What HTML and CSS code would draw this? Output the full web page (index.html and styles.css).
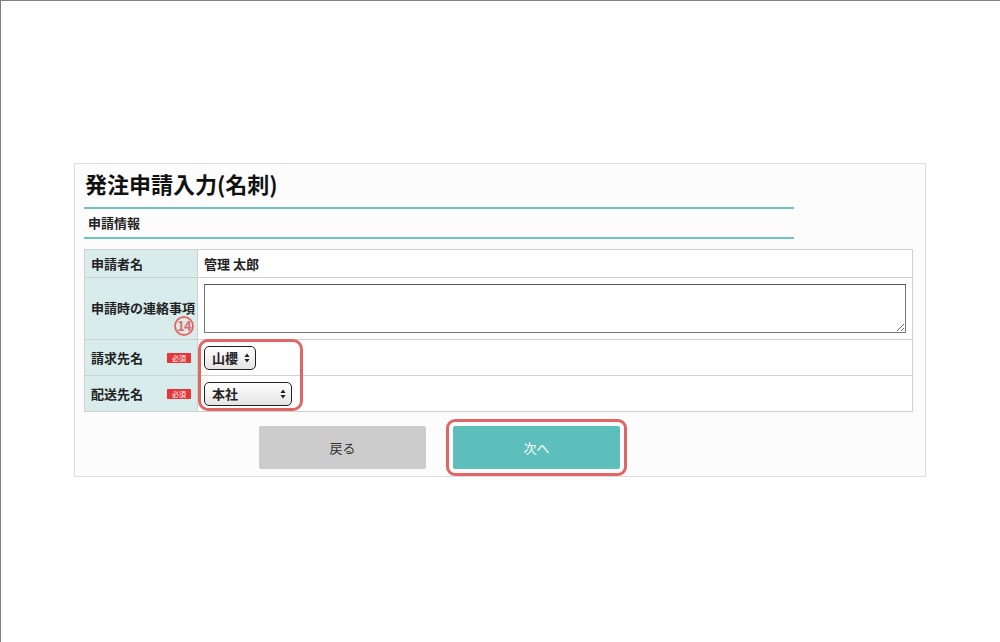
FILE: index.html
```html
<!DOCTYPE html>
<html lang="ja">
<head>
    <meta charset="UTF-8">
    <title>発注申請入力(名刺)</title>
    <link rel="stylesheet" href="styles.css">
</head>
<body>

<div class="screen">
    <section class="panel">
        <h1 class="page-title">発注申請入力(名刺)</h1>

        <h2 class="section-head">申請情報</h2>

        <table class="form-table">
            <tr class="row-name">
                <th>申請者名</th>
                <td class="value-text">管理 太郎</td>
            </tr>
            <tr class="row-note">
                <th>申請時の連絡事項</th>
                <td><textarea class="note"></textarea></td>
            </tr>
            <tr class="row-select">
                <th><span class="label">請求先名</span><span class="req">必須</span></th>
                <td>
                    <div class="fake-select short">
                        <span>山櫻</span>
                        <svg class="arrows" width="6" height="10" viewBox="0 0 6 10"><path d="M3 0.5 L5.6 4 L0.4 4 Z M3 9.5 L5.6 6 L0.4 6 Z" fill="#222"/></svg>
                    </div>
                </td>
            </tr>
            <tr class="row-select">
                <th><span class="label">配送先名</span><span class="req">必須</span></th>
                <td>
                    <div class="fake-select long">
                        <span>本社</span>
                        <svg class="arrows" width="6" height="10" viewBox="0 0 6 10"><path d="M3 0.5 L5.6 4 L0.4 4 Z M3 9.5 L5.6 6 L0.4 6 Z" fill="#222"/></svg>
                    </div>
                </td>
            </tr>
        </table>

        <div class="buttons">
            <button class="btn btn-back">戻る</button>
            <button class="btn btn-next">次へ</button>
        </div>

        <!-- annotations -->
        <span class="step-no">14</span>
        <div class="mark-box"></div>
    </section>
</div>

</body>
</html>
```

FILE: styles.css
```css
* {
    box-sizing: border-box;
}

html, body {
    margin: 0;
    height: 100%;
}

body {
    font-family: "Noto Sans CJK JP", "Noto Sans", sans-serif;
    color: #222;
    background: #fff;
    border-top: 1px solid #808080;
    border-left: 1px solid #808080;
}

.screen {
    padding: 162px 0 0 73px;
}

.panel {
    position: relative;
    width: 852px;
    height: 314px;
    background: #fcfcfc;
    border: 1px solid #dcdcdc;
    padding: 5px 12px 0 9px;
}

.page-title {
    margin: 0 0 10px 1px;
    font-size: 22px;
    line-height: 28px;
    font-weight: bold;
    color: #111;
}

.section-head {
    width: 710px;
    margin: 0 0 10px 0;
    height: 32px;
    border-top: 2px solid #6cc3c2;
    border-bottom: 2px solid #6cc3c2;
    padding-left: 4px;
    font-size: 13px;
    line-height: 28px;
    font-weight: bold;
}

.form-table {
    width: 829px;
    border-collapse: collapse;
    font-size: 13px;
}

.form-table th,
.form-table td {
    border: 1px solid #d0d0d0;
    padding: 0 6px;
}

.form-table th {
    width: 114px;
    background: #d9ecec;
    text-align: left;
    font-weight: bold;
    white-space: nowrap;
    padding-left: 6px;
    padding-right: 2px;
}

.form-table td {
    background: #fff;
}

.row-name {
    height: 28px;
}

.row-note {
    height: 62px;
}

.row-note th {
    padding-bottom: 2px;
}

.row-select {
    height: 36px;
}

.row-select .label {
    display: inline-block;
    width: 76px;
}

.value-text {
    font-weight: bold;
}

.note {
    display: block;
    width: 702px;
    height: 49px;
    margin: 0;
    border: 1px solid #777;
    border-top-color: #555;
    resize: both;
    background: #fff;
}

.req {
    display: inline-block;
    vertical-align: middle;
    width: 24px;
    height: 10px;
    background: #e8353a;
    color: #fff;
    font-size: 7px;
    line-height: 10px;
    text-align: center;
    font-weight: normal;
    margin-top: -3px;
}

.fake-select {
    display: flex;
    align-items: center;
    justify-content: space-between;
    height: 24px;
    padding: 0 5px 0 7px;
    border: 1px solid #222;
    border-radius: 5px;
    background: linear-gradient(#ffffff, #e4e4e4);
    font-weight: bold;
    font-size: 13px;
}

.fake-select.short {
    width: 52px;
}

.fake-select.long {
    width: 88px;
}

.buttons {
    display: flex;
    gap: 27px;
    margin: 14px 0 0 175px;
}

.btn {
    position: relative;
    width: 167px;
    height: 43px;
    border: none;
    border-radius: 2px;
    font-family: inherit;
    font-size: 13px;
    cursor: pointer;
}

.btn-back {
    background: #cccccc;
    color: #333;
}

.btn-next {
    background: #5cbfbc;
    color: #fff;
}

.btn-next::after {
    content: "";
    position: absolute;
    top: -7px;
    left: -7px;
    right: -7px;
    bottom: -7px;
    border: 3px solid #e06666;
    border-radius: 9px;
}

.step-no {
    position: absolute;
    left: 99px;
    top: 152px;
    width: 20px;
    height: 20px;
    border: 2px solid #e46a6a;
    border-radius: 50%;
    color: #e46a6a;
    font-size: 13px;
    font-weight: bold;
    line-height: 16px;
    text-align: center;
    letter-spacing: -1px;
    background: transparent;
}

.mark-box {
    position: absolute;
    left: 123px;
    top: 175px;
    width: 105px;
    height: 72px;
    border: 3px solid #e06666;
    border-radius: 10px;
}
```
